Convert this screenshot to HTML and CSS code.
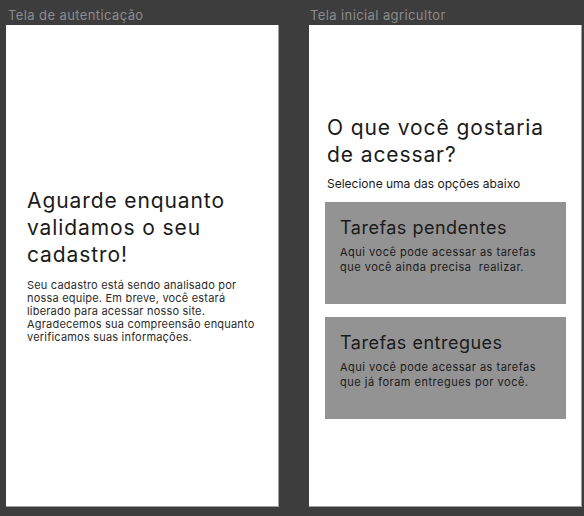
FILE: index.html
```html
<!DOCTYPE html>
<html lang="pt">
<head>
<meta charset="utf-8">
<title>Telas</title>
<link rel="stylesheet" href="styles.css">
</head>
<body>
<div class="canvas">
  <section class="screen">
    <div class="label">Tela de autenticação</div>
    <div class="frame frame-center">
      <h1 class="heading">Aguarde enquanto validamos o seu cadastro!</h1>
      <p class="body-text">Seu cadastro está sendo analisado por nossa equipe. Em breve, você estará liberado para acessar nosso site. Agradecemos sua compreensão enquanto verificamos suas informações.</p>
    </div>
  </section>
  <section class="screen screen-right">
    <div class="label">Tela inicial agricultor</div>
    <div class="frame frame-top">
      <h1 class="heading heading-right">O que você gostaria de acessar?</h1>
      <p class="subtitle">Selecione uma das opções abaixo</p>
      <div class="card">
        <h2 class="card-title">Tarefas pendentes</h2>
        <p class="card-text">Aqui você pode acessar as tarefas que você ainda precisa &nbsp;realizar.</p>
      </div>
      <div class="card">
        <h2 class="card-title">Tarefas entregues</h2>
        <p class="card-text">Aqui você pode acessar as tarefas que já foram entregues por você.</p>
      </div>
    </div>
  </section>
</div>
</body>
</html>
```

FILE: styles.css
```css
* { box-sizing: border-box; }
html, body {
  margin: 0;
  padding: 0;
  background: #3d3d3d;
  font-family: Inter, "Noto Sans", sans-serif;
}
.canvas {
  display: flex;
  gap: 30px;
  padding: 0 0 0 6px;
  width: 584px;
  height: 516px;
}
.screen {
  display: flex;
  flex-direction: column;
  width: 273px;
}
.label {
  height: 25px;
  color: #8c8c8c;
  font-size: 13px;
  line-height: 13px;
  letter-spacing: 0.4px;
  padding: 9px 0 0 2px;
  white-space: nowrap;
}
.screen-right .label { padding-left: 1px; }
.frame {
  height: 482px;
  background: #ffffff;
  border-right: 1px solid #a0a0a0;
  border-bottom: 1px solid #a0a0a0;
  display: flex;
  flex-direction: column;
}
.frame-center {
  justify-content: center;
  padding: 0 14px 0 21px;
}
.frame-top {
  padding: 89px 15px 0 16px;
}
.heading {
  margin: 0;
  font-weight: 400;
  font-size: 21px;
  line-height: 27px;
  letter-spacing: 0.9px;
  color: #1a1a1a;
}
.heading-right { padding-left: 2px; }
.body-text {
  margin: 11px 0 0;
  font-size: 11px;
  line-height: 13px;
  letter-spacing: 0.2px;
  color: #2a2a2a;
}
.subtitle {
  margin: 8px 0 0 2px;
  font-size: 12px;
  line-height: 15px;
  color: #1a1a1a;
}
.card {
  background: #939393;
  height: 102px;
  margin-top: 11px;
  padding: 15px 10px 0 15px;
}
.card + .card { margin-top: 13px; }
.card-title {
  margin: 0;
  font-weight: 400;
  font-size: 18px;
  line-height: 22px;
  letter-spacing: 0.5px;
  color: #1a1a1a;
}
.card-text {
  margin: 6px 0 0;
  font-size: 11px;
  line-height: 15px;
  letter-spacing: 0.5px;
  color: #1a1a1a;
}
```
